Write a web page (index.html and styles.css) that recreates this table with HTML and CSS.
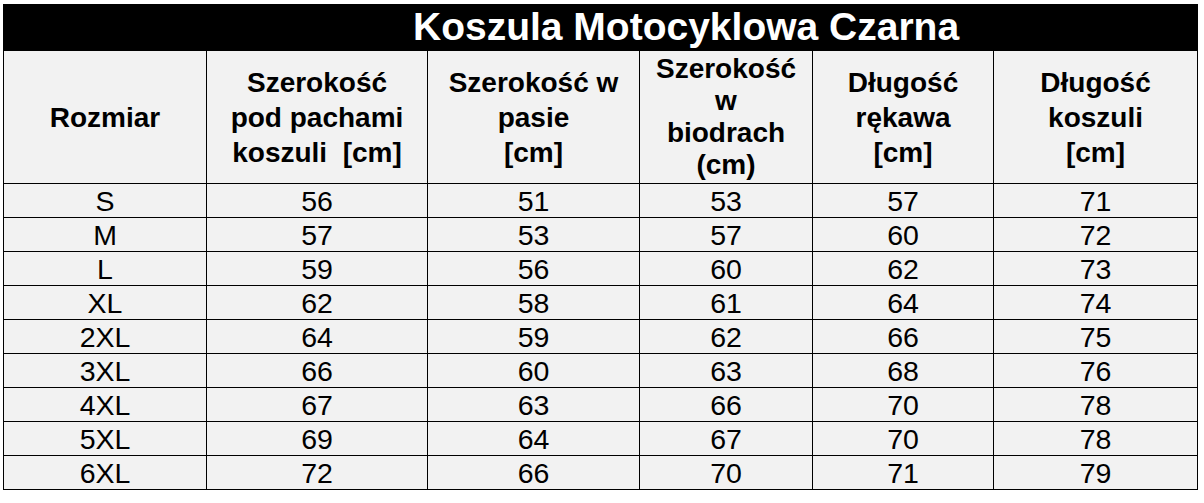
FILE: index.html
```html
<!DOCTYPE html>
<html lang="pl">
<head>
<meta charset="utf-8">
<title>Koszula Motocyklowa Czarna</title>
<link rel="stylesheet" href="styles.css">
</head>
<body>
<table class="size-table">
  <colgroup>
    <col class="c1"><col class="c2"><col class="c3"><col class="c4"><col class="c5"><col class="c6">
  </colgroup>
  <thead>
    <tr class="title-row"><th colspan="6"><span class="title">Koszula Motocyklowa Czarna</span></th></tr>
    <tr class="head-row">
      <th>Rozmiar</th>
      <th>Szerokość<br>pod pachami<br>koszuli&nbsp; [cm]</th>
      <th>Szerokość w<br>pasie<br>[cm]</th>
      <th class="tight">Szerokość<br>w<br>biodrach<br>(cm)</th>
      <th>Długość<br>rękawa<br>[cm]</th>
      <th>Długość<br>koszuli<br>[cm]</th>
    </tr>
  </thead>
  <tbody>
    <tr><td>S</td><td>56</td><td>51</td><td>53</td><td>57</td><td>71</td></tr>
    <tr><td>M</td><td>57</td><td>53</td><td>57</td><td>60</td><td>72</td></tr>
    <tr><td>L</td><td>59</td><td>56</td><td>60</td><td>62</td><td>73</td></tr>
    <tr><td>XL</td><td>62</td><td>58</td><td>61</td><td>64</td><td>74</td></tr>
    <tr><td>2XL</td><td>64</td><td>59</td><td>62</td><td>66</td><td>75</td></tr>
    <tr><td>3XL</td><td>66</td><td>60</td><td>63</td><td>68</td><td>76</td></tr>
    <tr><td>4XL</td><td>67</td><td>63</td><td>66</td><td>70</td><td>78</td></tr>
    <tr><td>5XL</td><td>69</td><td>64</td><td>67</td><td>70</td><td>78</td></tr>
    <tr><td>6XL</td><td>72</td><td>66</td><td>70</td><td>71</td><td>79</td></tr>
  </tbody>
</table>
</body>
</html>
```
FILE: styles.css
```css
html, body {
  margin: 0;
  padding: 0;
  background: #ffffff;
}
body {
  padding: 4px 0 0 3px;
  font-family: "Liberation Sans", Arial, sans-serif;
  color: #000;
}
.size-table {
  border-collapse: collapse;
  table-layout: fixed;
  width: 1194px;
  background: #f2f2f2;
}
.c1 { width: 203px; }
.c2 { width: 221px; }
.c3 { width: 212px; }
.c4 { width: 173px; }
.c5 { width: 181px; }
.c6 { width: 204px; }
.size-table th,
.size-table td {
  border: 1px solid #000;
  padding: 0;
  text-align: center;
  vertical-align: middle;
}
.title-row th {
  background: #000;
  color: #fff;
  height: 45px;
  text-align: left;
  padding-left: 409px;
}
.title {
  display: block;
  font-size: 39px;
  font-weight: bold;
  line-height: 44px;
  height: 45px;
  overflow: hidden;
}
.head-row th {
  height: 132px;
  font-size: 28px;
  font-weight: bold;
  line-height: 35px;
}
.head-row th.tight {
  line-height: 32px;
}
.size-table td {
  height: 33px;
  font-size: 28.5px;
  line-height: 32px;
}
```
